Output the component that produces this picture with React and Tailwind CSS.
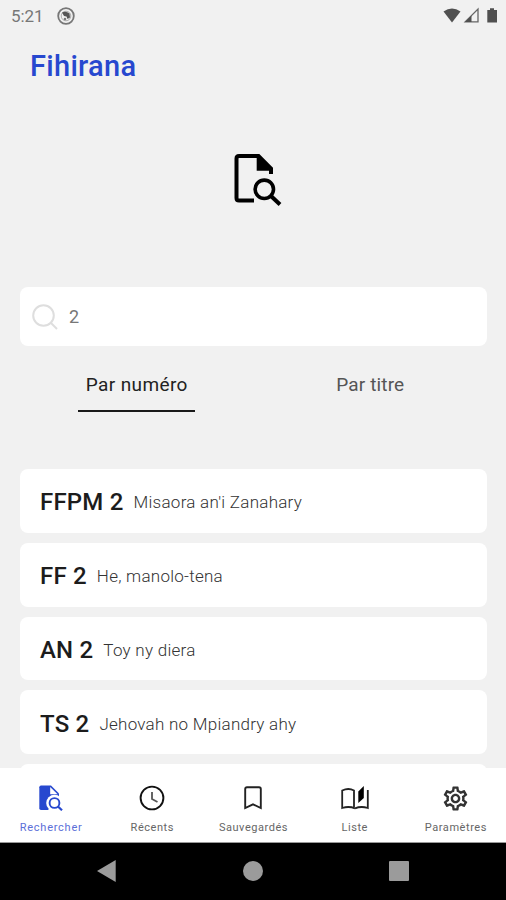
import React from 'react';
import { MdOutlineSettings } from 'react-icons/md';

const songs = [
    { code: 'FFPM 2', title: "Misaora an'i Zanahary" },
    { code: 'FF 2', title: 'He, manolo-tena' },
    { code: 'AN 2', title: 'Toy ny diera' },
    { code: 'TS 2', title: 'Jehovah no Mpiandry ahy' },
];

const FileSearchIcon = () => (
    <svg width="48" height="52" viewBox="0 0 48 52" fill="none" stroke="#000" strokeWidth="4">
        <path d="M20 46.5H5Q2.5 46.5 2.5 44V4.5Q2.5 2 5 2H24.5L37 14.5V20" />
        <path d="M22.7 1.5V16.7H38L24.5 1.5Z" fill="#000" stroke="none" />
        <circle cx="30.3" cy="35.3" r="9.2" strokeWidth="3.6" />
        <path d="M37 42L46 50.5" />
    </svg>
);

const FileSearchFilledIcon = () => (
    <svg width="24" height="26" viewBox="0 0 24 26" fill="none" stroke="#2748cf">
        <path d="M2 .5H12L20 8.5V12L9 25H2Q.3 25 .3 23.3V2.2Q.3 .5 2 .5Z" fill="#2748cf" stroke="none" />
        <path d="M11.2 2V9.3H18.6Z" fill="#fff" stroke="none" />
        <circle cx="15.5" cy="18" r="8.3" fill="#fff" stroke="none" />
        <circle cx="15.5" cy="18" r="4.9" strokeWidth="1.9" />
        <path d="M19 21.5L23 25.3" strokeWidth="2.2" />
    </svg>
);

const ClockIcon = () => (
    <svg width="26" height="26" viewBox="0 0 26 26" fill="none" stroke="#111">
        <circle cx="13" cy="13" r="11.4" strokeWidth="1.9" />
        <path d="M13 7V14L18.5 17" stroke="#555" strokeWidth="1.8" />
    </svg>
);

const BookmarkIcon = () => (
    <svg width="18" height="24" viewBox="0 0 18 24" fill="none" stroke="#222" strokeWidth="1.9">
        <path d="M1.2 3Q1.2 1.3 3 1.3H15Q16.8 1.3 16.8 3V22L9 18.3L1.2 22Z" />
    </svg>
);

const BookIcon = () => (
    <svg width="28" height="26" viewBox="0 0 28 26" fill="none" stroke="#222" strokeWidth="1.8">
        <path d="M14 23.4Q8 20.8 1.2 23V5.5Q7.5 2.5 13 5.5V22M14 23.4Q20 20.8 26.8 23V5" />
        <path d="M17.3 6.5L22.8 1V13L17.3 18Z" fill="#000" stroke="none" />
    </svg>
);

const tabs = [
    { label: 'Rechercher', icon: <FileSearchFilledIcon />, active: true },
    { label: 'Récents', icon: <ClockIcon /> },
    { label: 'Sauvegardés', icon: <BookmarkIcon /> },
    { label: 'Liste', icon: <BookIcon /> },
    { label: 'Paramètres', icon: <MdOutlineSettings size={29} color="#333" /> },
];

const StatusBar = () => (
    <div className="flex h-8 items-center justify-between pr-[7px] pl-[11px] text-[#777]">
        <div className="flex items-center gap-[14px]">
            <span className="text-[17px] leading-8 tracking-[-0.1px]">5:21</span>
            <svg width="18" height="18" viewBox="0 0 18 18" fill="none">
                <circle cx="9" cy="9" r="7.8" stroke="#777" strokeWidth="1.8" />
                <circle cx="9" cy="9" r="4.8" stroke="#aaa" strokeWidth="1" />
                <path d="M5 5.5Q9 3.5 12.5 6.5L13 10.5L10.5 12L9.5 9.5L7 9Z" fill="#555" />
                <circle cx="8" cy="12" r="1.3" fill="#777" />
            </svg>
        </div>
        <svg width="56" height="18" viewBox="0 0 56 18" fill="none">
            <path d="M.5 4.5Q9 -1.5 17.5 4.5L9 15.5Z" fill="#505050" />
            <path d="M35 2V14.8H22.2Z" stroke="#666" strokeWidth="1.3" />
            <path d="M28.5 8.5V15H22Z" fill="#505050" />
            <path d="M47 1.3H51V3H54V15.5H44.3V3H47Z" fill="#505050" />
        </svg>
    </div>
);

const SongCard = ({ song }) => (
    <div className="flex h-[63.8px] shrink-0 items-center gap-[10px] rounded-lg bg-white pt-[3px] pl-5">
        <span className="text-[24px] leading-9 font-medium tracking-[0.2px] text-[#1c1c1c]">{song.code}</span>
        <span className="text-[17px] leading-6 font-light tracking-[0.26px] text-[#333]">{song.title}</span>
    </div>
);

const BottomTabs = () => (
    <nav className="grid h-[74.5px] shrink-0 grid-cols-5 border-b border-[#999] bg-white">
        {tabs.map((tab) => (
            <div key={tab.label} className="flex flex-col items-center pt-[15px]">
                <div className="flex h-[30px] items-center pl-px">{tab.icon}</div>
                <span
                    className={
                        tab.active
                            ? 'mt-[7px] pl-px text-[11px] leading-4 tracking-[0.75px] text-[#5b6fd8]'
                            : 'mt-[7px] pl-px text-[11px] leading-4 tracking-[0.55px] text-[#666]'
                    }
                >
                    {tab.label}
                </span>
            </div>
        ))}
    </nav>
);

const SystemNav = () => (
    <div className="grid h-[57.5px] shrink-0 grid-cols-[34px_1fr_1fr_1fr_34px] items-center justify-items-center bg-black">
        <svg className="col-start-2" width="20" height="22" viewBox="0 0 20 22">
            <path d="M0 11L18.7 0V22Z" fill="#9b9b9b" />
        </svg>
        <div className="size-5 rounded-full bg-[#9b9b9b]" />
        <div className="size-5 rounded-[1px] bg-[#9b9b9b]" />
    </div>
);

const App = () => {
    return (
        <div className="flex h-[900px] w-[506px] flex-col overflow-hidden bg-[#f1f1f1] font-[Roboto,sans-serif]">
            <main className="flex h-[768px] shrink-0 flex-col overflow-hidden">
                <StatusBar />
                <h1 className="mt-[14px] pl-[30px] text-[29px] leading-10 font-medium tracking-[0.3px] text-[#2748cf]">
                    Fihirana
                </h1>

                <div className="mt-[68px] flex justify-center pl-[9px]">
                    <FileSearchIcon />
                </div>

                <div className="mx-5 mt-[81px] mr-[19px] flex h-[59px] shrink-0 items-center rounded-lg bg-white pl-3">
                    <svg width="26" height="26" viewBox="0 0 26 26" fill="none" stroke="#dedede" strokeWidth="2">
                        <circle cx="11.5" cy="11.5" r="10.3" />
                        <path d="M19 19L25 25" />
                    </svg>
                    <span className="pl-[11px] text-[18px] text-[#777]">2</span>
                </div>

                <div className="flex h-[66px] shrink-0 pr-[19px] pl-5 text-[19px] leading-7">
                    <div className="flex flex-1 justify-center pt-[25px]">
                        <div className="h-[41px] w-[117px] border-b-2 border-[#1a1a1a] text-center tracking-[0.4px] text-[#222]">
                            Par numéro
                        </div>
                    </div>
                    <div className="flex-1 pt-[25px] text-center tracking-[0.15px] text-[#555]">Par titre</div>
                </div>

                <div className="mt-[57px] mr-[19px] ml-5 flex flex-col gap-[10px]">
                    {songs.map((song) => (
                        <SongCard key={song.code} song={song} />
                    ))}
                    <div className="h-[63.8px] shrink-0 rounded-lg bg-white" />
                </div>
            </main>
            <BottomTabs />
            <SystemNav />
        </div>
    );
};

export default App;
